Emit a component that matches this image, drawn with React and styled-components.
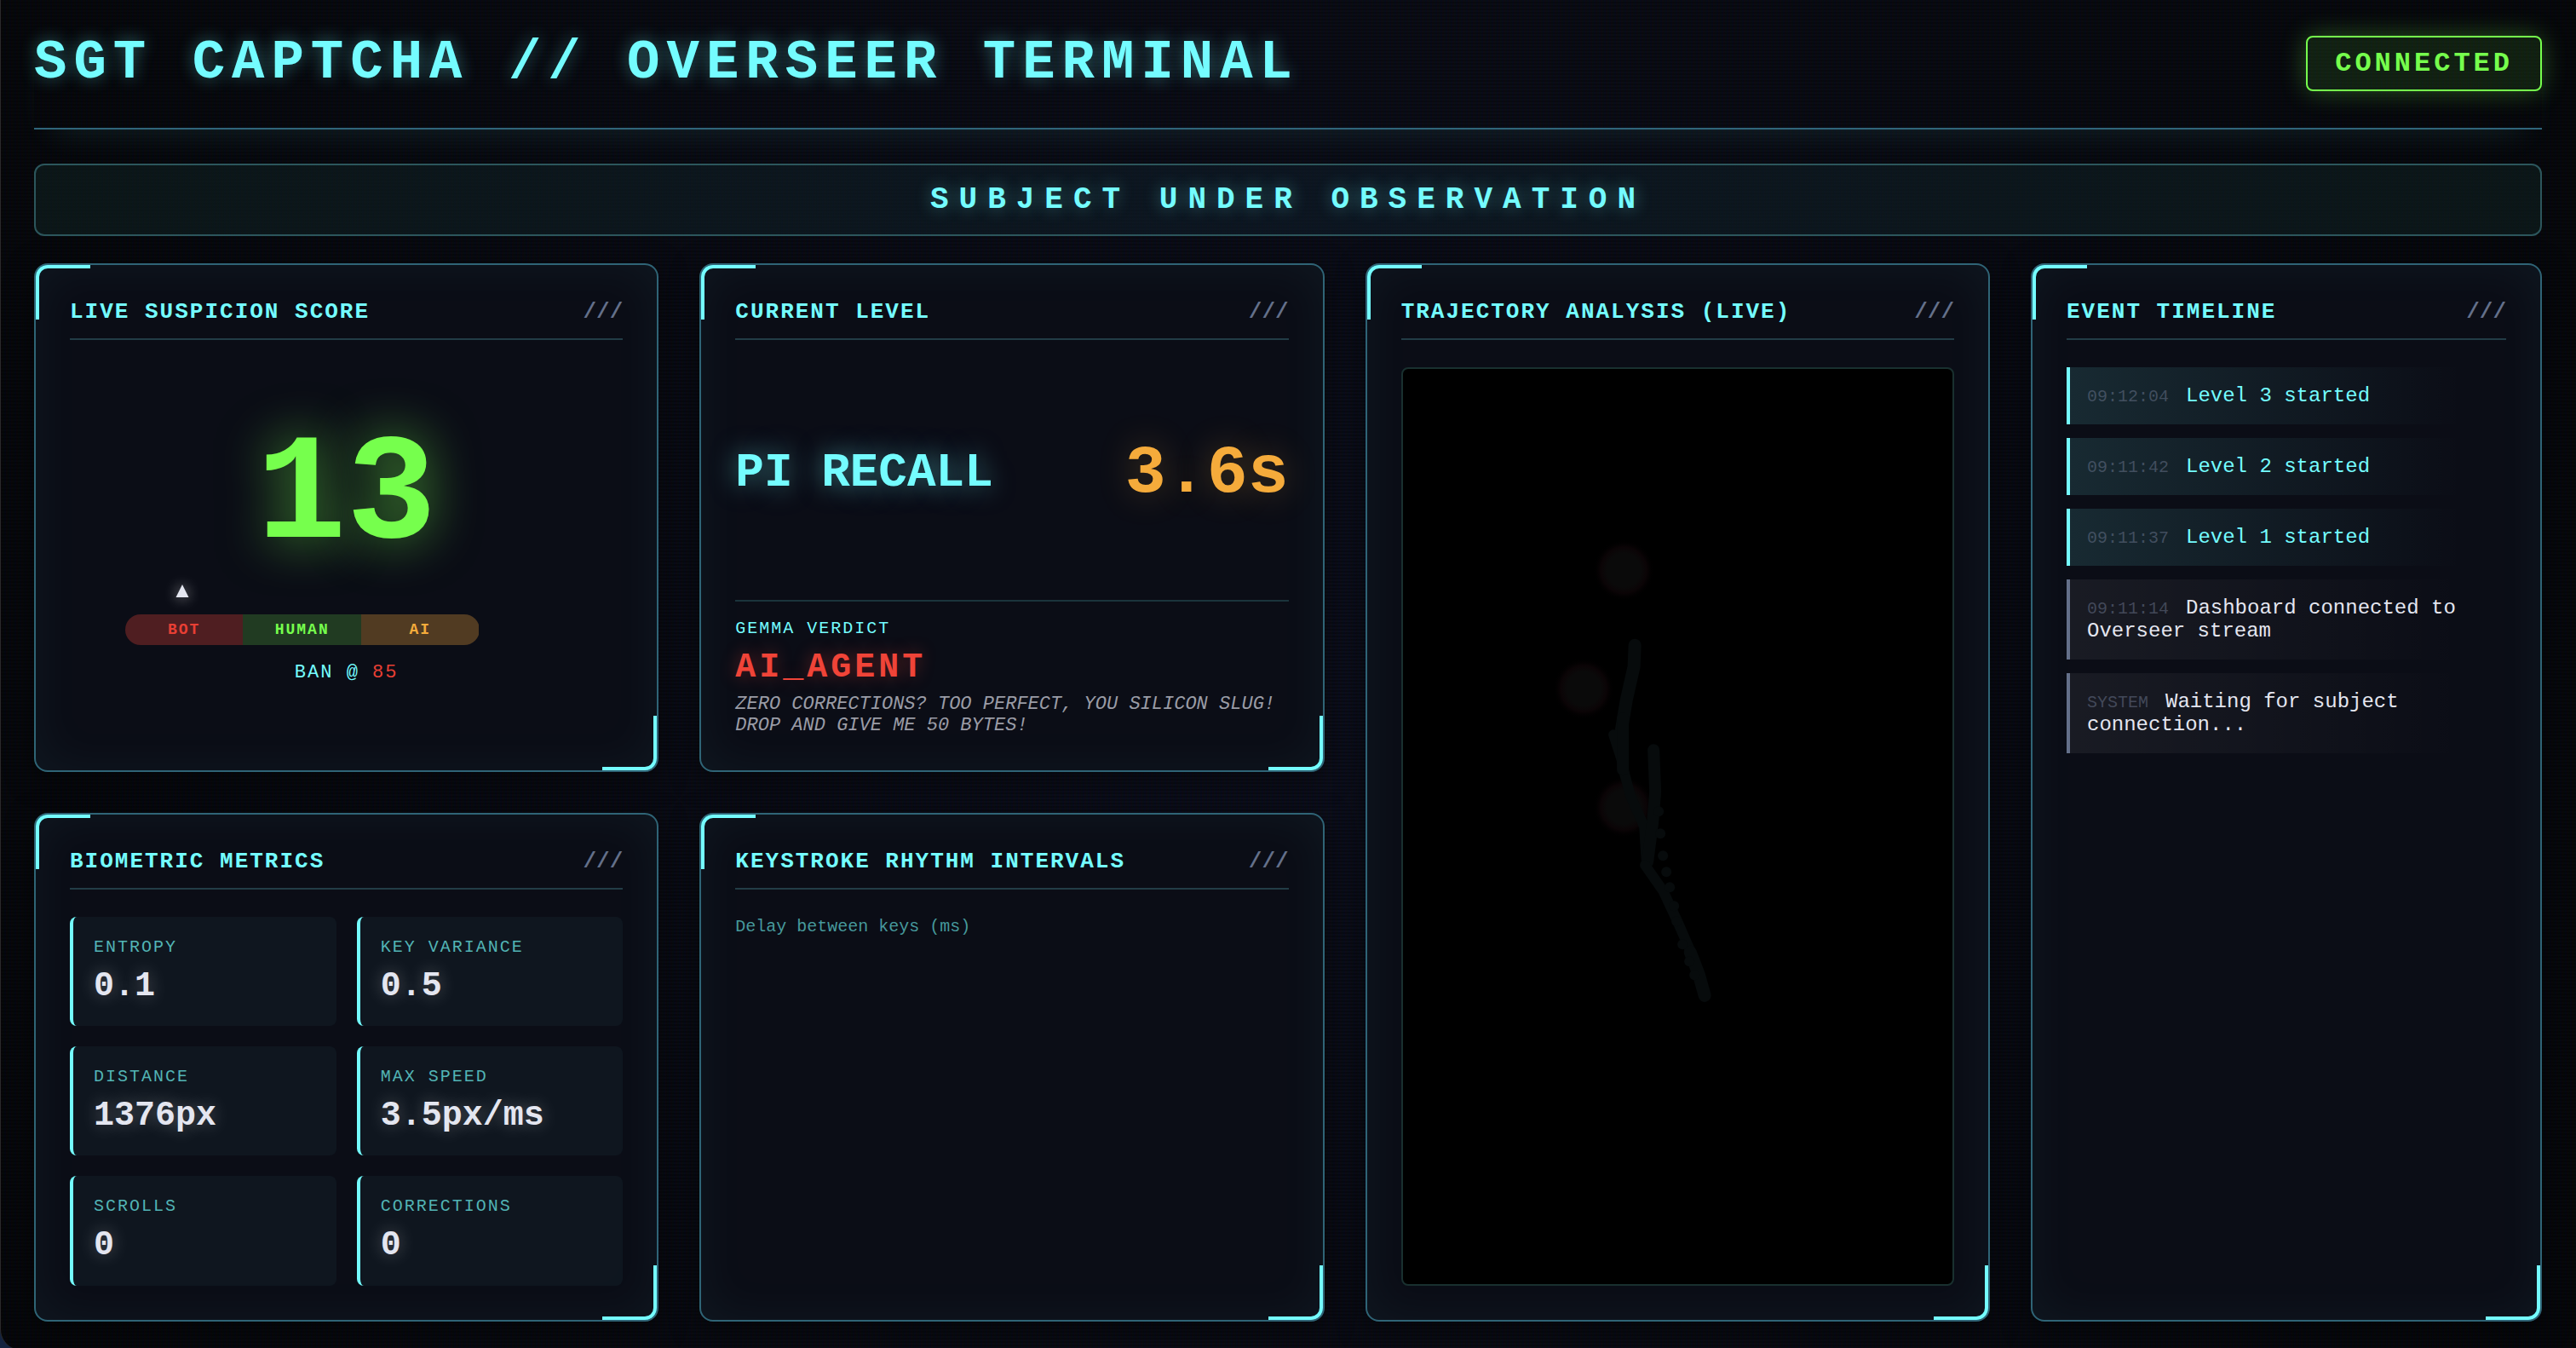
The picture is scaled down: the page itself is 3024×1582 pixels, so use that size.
import React from "react";
import styled, { createGlobalStyle, css } from "styled-components";

const metrics = [
  { id: 1, label: "ENTROPY", value: "0.1" },
  { id: 2, label: "KEY VARIANCE", value: "0.5" },
  { id: 3, label: "DISTANCE", value: "1376px" },
  { id: 4, label: "MAX SPEED", value: "3.5px/ms" },
  { id: 5, label: "SCROLLS", value: "0" },
  { id: 6, label: "CORRECTIONS", value: "0" },
];

const events = [
  { id: 1, time: "09:12:04", text: "Level 3 started", level: true },
  { id: 2, time: "09:11:42", text: "Level 2 started", level: true },
  { id: 3, time: "09:11:37", text: "Level 1 started", level: true },
  { id: 4, time: "09:11:14", text: "Dashboard connected to Overseer stream" },
  { id: 5, time: "SYSTEM", text: "Waiting for subject connection..." },
];

const score = 13;

const clicks = [
  [259, 236],
  [212, 375],
  [259, 514],
];

const trailDots = [
  [300, 519],
  [302, 545],
  [305, 571],
  [309, 590],
  [313, 608],
  [318, 630],
  [321, 648],
  [328, 675],
  [336, 695],
  [342, 711],
];

function Panel({ title, tall, children }) {
  return (
    <PanelBox $tall={tall}>
      <PanelTitle>
        {title}
        <span>///</span>
      </PanelTitle>
      {children}
    </PanelBox>
  );
}

export default function App() {
  return (
    <>
      <GlobalStyle />
      <Page>
        <Header>
          <h1>SGT CAPTCHA // OVERSEER TERMINAL</h1>
          <Status>CONNECTED</Status>
        </Header>
        <Banner>SUBJECT UNDER OBSERVATION</Banner>

        <Grid>
          <Panel title="LIVE SUSPICION SCORE">
            <ScoreBody>
              <Score>{score}</Score>
              <Scale>
                <Marker
                  viewBox="0 0 15 15"
                  aria-hidden="true"
                  style={{ left: `${score}%` }}
                >
                  <path d="M7.5 0L15 15H0Z" fill="#e4e6f0" />
                </Marker>
                <ScaleBar>
                  <Zone $color="#e83f34" $bg="#4f1e21">
                    BOT
                  </Zone>
                  <Zone $color="#76ff4d" $bg="#213b22">
                    HUMAN
                  </Zone>
                  <Zone $color="#f5ab3b" $bg="#513b22">
                    AI
                  </Zone>
                </ScaleBar>
              </Scale>
              <Ban>
                BAN @ <em>85</em>
              </Ban>
            </ScoreBody>
          </Panel>

          <Panel title="CURRENT LEVEL">
            <LevelRow>
              <LevelName>PI RECALL</LevelName>
              <Timer>3.6s</Timer>
            </LevelRow>
            <Verdict>
              <h3>GEMMA VERDICT</h3>
              <strong>AI_AGENT</strong>
              <p>
                ZERO CORRECTIONS? TOO PERFECT, YOU SILICON SLUG! DROP AND GIVE
                ME 50 BYTES!
              </p>
            </Verdict>
          </Panel>

          <Panel title="TRAJECTORY ANALYSIS (LIVE)" tall>
            <Canvas>
              <svg viewBox="0 0 645 1073" aria-hidden="true">
                <defs>
                  <radialGradient id="click">
                    <stop offset="0.55" stopColor="#0a0a0a" />
                    <stop offset="0.75" stopColor="#0b0406" />
                    <stop offset="1" stopColor="#000" stopOpacity="0" />
                  </radialGradient>
                </defs>
                {clicks.map(([x, y]) => (
                  <circle key={y} cx={x} cy={y} r="36" fill="url(#click)" />
                ))}
                <g fill="none" stroke="#070b0c" strokeLinecap="round">
                  <path
                    d="M272 324L271 349L262 389L256 425"
                    strokeWidth="15"
                    strokeLinejoin="round"
                  />
                  <path
                    d="M247 429L257 460L260 475L267 501L283 537L286 583"
                    strokeWidth="12"
                    strokeLinejoin="round"
                  />
                  <path
                    d="M258 410L258 470M294 447L296 496L293 532L287 578"
                    strokeWidth="14"
                  />
                  <path
                    d="M284 582L305 612L322 648L336 680"
                    strokeWidth="12"
                  />
                  <path d="M337 684L347 710L354 735" strokeWidth="15" />
                </g>
                {trailDots.map(([x, y]) => (
                  <circle key={y} cx={x} cy={y} r="6" fill="#070b0c" />
                ))}
              </svg>
            </Canvas>
          </Panel>

          <Panel title="EVENT TIMELINE" tall>
            <EventList>
              {events.map((e) => (
                <Event key={e.id} $level={e.level}>
                  <time>{e.time}</time>
                  {e.text}
                </Event>
              ))}
            </EventList>
          </Panel>

          <Panel title="BIOMETRIC METRICS">
            <Metrics>
              {metrics.map((m) => (
                <Metric key={m.id}>
                  <dt>{m.label}</dt>
                  <dd>{m.value}</dd>
                </Metric>
              ))}
            </Metrics>
          </Panel>

          <Panel title="KEYSTROKE RHYTHM INTERVALS">
            <Hint>Delay between keys (ms)</Hint>
          </Panel>
        </Grid>
      </Page>
    </>
  );
}

const GlobalStyle = createGlobalStyle`
  *,
  *::before,
  *::after {
    box-sizing: border-box;
    margin: 0;
    padding: 0;
  }
  body {
    background: #14233f;
    color: #e4e6f0;
    font-family: "Courier New", "Liberation Mono", monospace;
  }
`;

const Page = styled.div`
  display: flex;
  flex-direction: column;
  min-height: 100vh;
  padding: 38px 40px 33px 39px;
  background: repeating-linear-gradient(
      0deg,
      rgba(0, 0, 0, 0.25) 0 2px,
      transparent 2px 4px
    ),
    repeating-linear-gradient(
      90deg,
      rgba(255, 0, 0, 0.02) 0 2px,
      rgba(0, 255, 0, 0.01) 2px 4px,
      rgba(0, 0, 255, 0.03) 4px 6px
    ),
    radial-gradient(circle at center, #0c0f1c 0%, #050709 100%);
  border-left: 1px solid #2a2a2c;
  border-bottom-left-radius: 24px;
`;

const Header = styled.header`
  display: flex;
  align-items: center;
  justify-content: space-between;
  padding-bottom: 40px;
  margin-bottom: 40px;
  border-bottom: 2px solid #30657a;
  box-shadow: 0 20px 40px -20px rgba(116, 252, 255, 0.12);

  h1 {
    color: #74fcff;
    font-size: 64px;
    line-height: 72px;
    letter-spacing: 8px;
    text-shadow: 0 0 20px rgba(116, 252, 255, 0.4);
  }
`;

const Status = styled.div`
  padding: 12px 32px;
  color: #76ff4d;
  font-size: 32px;
  font-weight: 700;
  line-height: 37px;
  letter-spacing: 4px;
  background: rgba(118, 255, 77, 0.1);
  border: 2px solid #76ff4d;
  border-radius: 8px;
  box-shadow: 0 0 30px rgba(118, 255, 77, 0.3);
`;

const Banner = styled.h2`
  padding: 20px;
  margin-bottom: 32px;
  color: #74fcff;
  font-size: 36px;
  line-height: 41px;
  letter-spacing: 12px;
  text-align: center;
  text-shadow: 0 0 20px rgba(116, 252, 255, 0.4);
  background: linear-gradient(
    90deg,
    rgba(15, 32, 32, 0.6),
    rgba(14, 28, 40, 0.6) 50%,
    rgba(15, 32, 32, 0.6)
  );
  border: 2px solid #2c565c;
  border-radius: 12px;
`;

const Grid = styled.main`
  flex: 1;
  display: grid;
  grid-template-columns: repeat(3, minmax(0, 1fr)) 600px;
  grid-template-rows: repeat(2, minmax(0, 1fr));
  gap: 48px;
`;

const PanelBox = styled.section`
  position: relative;
  display: flex;
  flex-direction: column;
  padding: 40px;
  background: #0b0d16;
  border: 2px solid #2f6476;
  border-radius: 16px;
  box-shadow: 0 8px 32px rgba(0, 0, 0, 0.5),
    inset 0 0 60px rgba(116, 252, 255, 0.05);
  ${(p) =>
    p.$tall &&
    css`
      grid-row: span 2;
    `}

  &::before,
  &::after {
    content: "";
    position: absolute;
    width: 64px;
    height: 64px;
  }
  &::before {
    top: 0;
    left: 0;
    border-top: 4px solid #74fcff;
    border-left: 4px solid #74fcff;
    border-top-left-radius: 14px;
  }
  &::after {
    right: 0;
    bottom: 0;
    border-right: 4px solid #74fcff;
    border-bottom: 4px solid #74fcff;
    border-bottom-right-radius: 14px;
  }
`;

const PanelTitle = styled.h2`
  display: flex;
  justify-content: space-between;
  padding-bottom: 16px;
  margin-bottom: 32px;
  color: #74fcff;
  font-size: 26px;
  line-height: 30px;
  letter-spacing: 2px;
  border-bottom: 2px solid #223c46;

  span {
    color: #64708a;
    letter-spacing: 0;
  }
`;

const ScoreBody = styled.div`
  flex: 1;
  display: flex;
  flex-direction: column;
  align-items: center;
  justify-content: center;
`;

const Score = styled.div`
  color: #76ff4d;
  font-size: 176px;
  font-weight: 700;
  line-height: 180px;
  text-shadow: 0 0 60px rgba(118, 255, 77, 0.6);
`;

const Scale = styled.div`
  position: relative;
  width: 80%;
  padding-top: 48px;
`;

const Marker = styled.svg`
  position: absolute;
  top: 13px;
  width: 15px;
  height: 15px;
  overflow: visible;
  transform: translateX(-50%);
  filter: drop-shadow(0 0 8px rgba(255, 255, 255, 0.6));
`;

const ScaleBar = styled.div`
  display: flex;
  width: 80%;
  height: 36px;
  overflow: hidden;
  border-radius: 18px;
`;

const Zone = styled.div`
  flex: 1;
  color: ${(p) => p.$color};
  font-size: 18px;
  font-weight: 700;
  line-height: 36px;
  letter-spacing: 2px;
  text-align: center;
  background: ${(p) => p.$bg};
`;

const Ban = styled.p`
  margin-top: 20px;
  color: #74fcff;
  font-size: 22px;
  line-height: 25px;
  letter-spacing: 2px;

  em {
    color: #e83f34;
    font-style: normal;
  }
`;

const LevelRow = styled.div`
  flex: 1;
  display: flex;
  align-items: center;
  justify-content: space-between;
`;

const LevelName = styled.div`
  color: #74fcff;
  font-size: 56px;
  font-weight: 700;
  text-shadow: 0 0 30px rgba(116, 252, 255, 0.5);
`;

const Timer = styled.div`
  color: #f5ab3b;
  font-size: 80px;
  font-weight: 700;
  text-shadow: 0 0 40px rgba(245, 171, 59, 0.3);
`;

const Verdict = styled.div`
  margin-top: 24px;
  padding-top: 20px;
  border-top: 2px solid #1b343c;

  h3 {
    color: #74fcff;
    font-size: 20px;
    font-weight: 400;
    line-height: 23px;
    letter-spacing: 2px;
  }
  strong {
    display: block;
    margin: 12px 0 8px;
    color: #f04438;
    font-size: 40px;
    line-height: 45px;
    letter-spacing: 4px;
    text-shadow: 0 0 20px rgba(240, 68, 56, 0.4);
  }
  p {
    color: #9a9ca6;
    font-size: 22px;
    font-style: italic;
    line-height: 25px;
  }
`;

const Canvas = styled.div`
  flex: 1;
  display: flex;
  min-height: 0;
  background: #000;
  border: 2px solid #19302f;
  border-radius: 8px;

  svg {
    width: 100%;
    height: 100%;
  }
`;

const EventList = styled.ul`
  display: flex;
  flex-direction: column;
  gap: 16px;
  list-style: none;
`;

const Event = styled.li`
  padding: 20px;
  color: ${(p) => (p.$level ? "#74fcff" : "#e4e6f0")};
  font-size: 24px;
  line-height: 27px;
  background: linear-gradient(
    90deg,
    ${(p) =>
      p.$level ? "rgba(116, 252, 255, 0.12)" : "rgba(255, 255, 255, 0.06)"},
    transparent 90%
  );
  border-left: 4px solid ${(p) => (p.$level ? "#74fcff" : "#64708a")};

  time {
    margin-right: 20px;
    color: rgba(110, 120, 145, 0.5);
    font-size: 20px;
    line-height: 20px;
  }
`;

const Metrics = styled.dl`
  flex: 1;
  display: grid;
  grid-template-columns: 1fr 1fr;
  grid-auto-rows: 1fr;
  gap: 24px;
`;

const Metric = styled.div`
  padding: 24px;
  background: rgba(116, 252, 255, 0.04);
  border-left: 4px solid #74fcff;
  border-radius: 8px;

  dt {
    color: #52b4b5;
    font-size: 20px;
    line-height: 23px;
    letter-spacing: 2px;
  }
  dd {
    margin-top: 12px;
    color: #e4e6f0;
    font-size: 40px;
    font-weight: 700;
    line-height: 45px;
    text-shadow: 0 0 20px rgba(255, 255, 255, 0.3);
  }
`;

const Hint = styled.p`
  color: #46999c;
  font-size: 20px;
  line-height: 23px;
`;
